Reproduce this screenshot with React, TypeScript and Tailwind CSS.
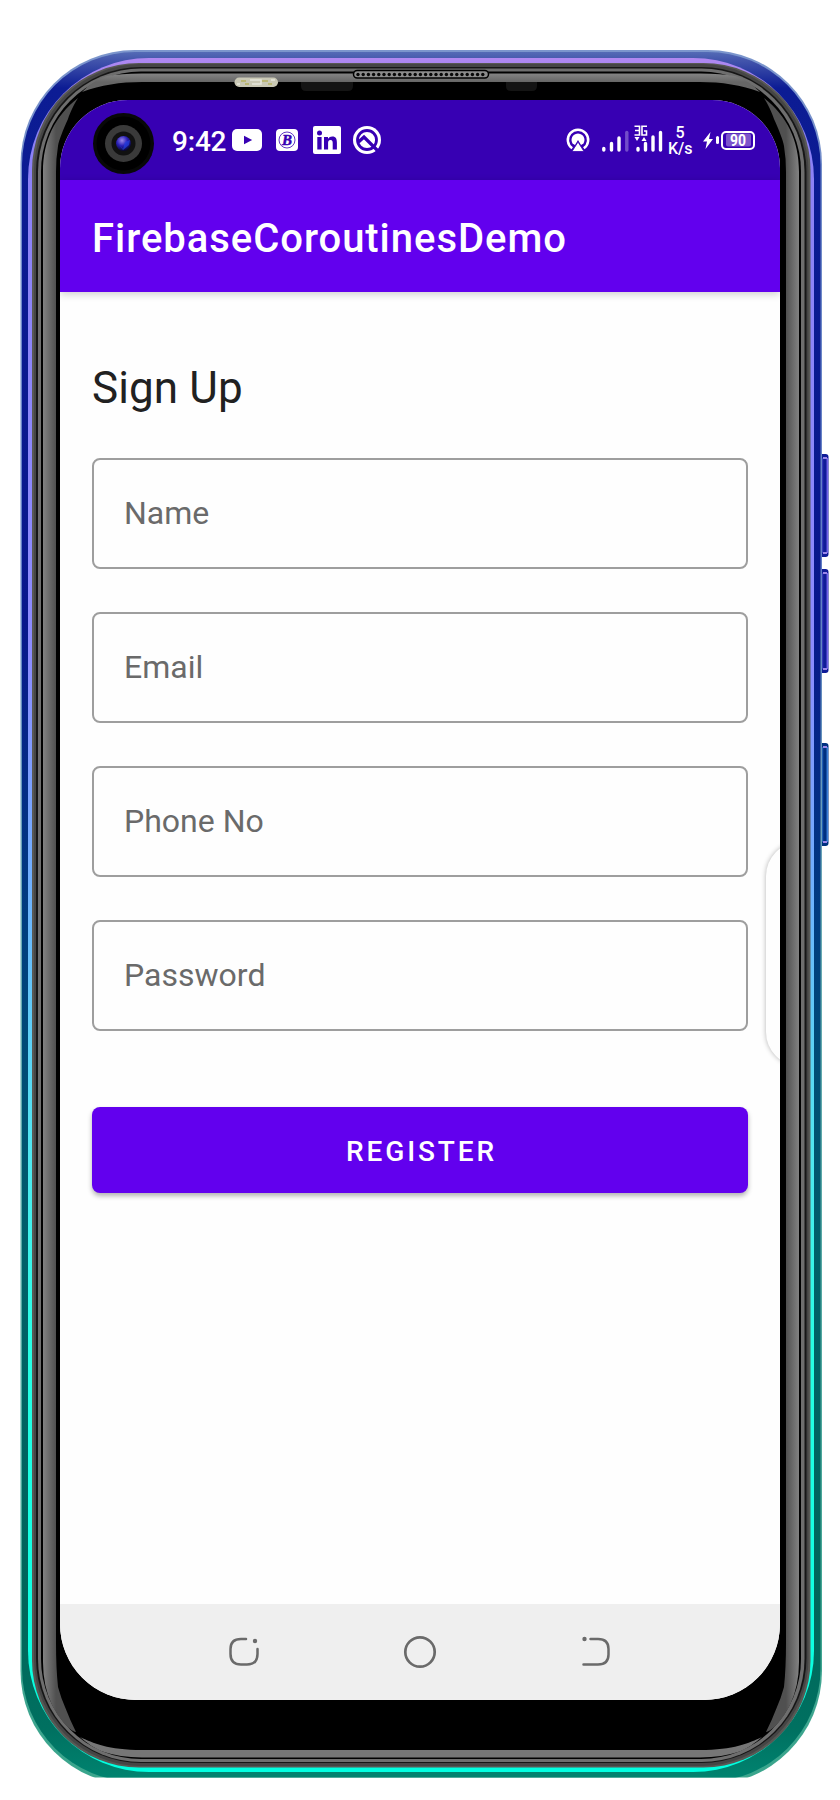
const ink = "#6a6a6a";

function Reflections() {
  return (
    <>
      <path
        d="M43 172C43 140 55 116 78 98C74 104 70 113 68 119C63 130 59 140 58 146Q56 158 56 172V1643Q56 1668 58 1687Q61 1698 65 1707Q70 1720 76 1732C69 1731 58 1717 52 1705Q43 1686 43 1662Z"
        fill="url(#glass)"
      />
      <path d="M82 92C90 84 97 79 107 76Q120 73.500 142 73.500H421V82H142C120 82 101 85 82 92Z" fill="url(#topGlass)" />
      <path d="M80 1737C93 1743 108 1750 142 1750H421V1757.500H142Q119 1757 104 1752C95 1749 87 1743 80 1737Z" fill="#767676" />
    </>
  );
}

function Frame() {
  const dots = Array.from({ length: 25 }, (_, i) => 358 + i * 5.2);
  const keys = [
    { y: 454, h: 103, fill: "#101c98", light: "#7264e8", dark: "#3a40c0" },
    { y: 569, h: 104, fill: "#101c98", light: "#7264e8", dark: "#3a40c0" },
    { y: 743, h: 103, fill: "#003080", light: "#3c80d8", dark: "#2868c0" },
  ];
  return (
    <svg className="absolute inset-0" width="840" height="1800" viewBox="0 0 840 1800">
      <defs>
        <linearGradient id="body" gradientUnits="userSpaceOnUse" x1="0" y1="50" x2="0" y2="1780">
          <stop offset="0" stopColor="#5870b8" />
          <stop offset="0.006" stopColor="#4355ac" />
          <stop offset="0.022" stopColor="#0c1c94" />
          <stop offset="0.33" stopColor="#08178c" />
          <stop offset="0.5" stopColor="#003c80" />
          <stop offset="0.7" stopColor="#006068" />
          <stop offset="0.9" stopColor="#00665a" />
          <stop offset="0.97" stopColor="#007060" />
          <stop offset="1" stopColor="#008470" />
        </linearGradient>
        <linearGradient id="edge" gradientUnits="userSpaceOnUse" x1="0" y1="50" x2="0" y2="1780">
          <stop offset="0" stopColor="#7b95cc" />
          <stop offset="0.3" stopColor="#5f7cc4" />
          <stop offset="0.5" stopColor="#6aaab4" />
          <stop offset="1" stopColor="#3aa58c" />
        </linearGradient>
        <linearGradient id="rim" gradientUnits="userSpaceOnUse" x1="0" y1="50" x2="0" y2="1780">
          <stop offset="0" stopColor="#b78af0" />
          <stop offset="0.03" stopColor="#8c80f5" />
          <stop offset="0.35" stopColor="#8c8cff" />
          <stop offset="0.48" stopColor="#70b0ff" />
          <stop offset="0.64" stopColor="#50e8f0" />
          <stop offset="0.75" stopColor="#28ffe4" />
          <stop offset="1" stopColor="#00ffe0" />
        </linearGradient>
        <linearGradient id="glass" gradientUnits="userSpaceOnUse" x1="43" y1="0" x2="56" y2="0">
          <stop offset="0" stopColor="#828282" />
          <stop offset="0.85" stopColor="#585858" />
          <stop offset="1" stopColor="#505050" />
        </linearGradient>
        <linearGradient id="topGlass" gradientUnits="userSpaceOnUse" x1="0" y1="73" x2="0" y2="82">
          <stop offset="0" stopColor="#868686" />
          <stop offset="1" stopColor="#666" />
        </linearGradient>
        <radialGradient id="lens" cx="0.4" cy="0.3" r="0.7">
          <stop offset="0" stopColor="#9a86e8" />
          <stop offset="0.5" stopColor="#2a20b8" />
          <stop offset="1" stopColor="#080830" />
        </radialGradient>
        <clipPath id="crop"><rect width="840" height="1777.5" /></clipPath>
      </defs>
      {keys.map((k) => (
        <g key={k.y} fill="none">
          <rect x="817" y={k.y} width="11.500" height={k.h} rx="3" fill={k.fill} />
          <path d={`M827.3 ${k.y + 4}v${k.h - 8}`} stroke={k.light} strokeWidth="1.500" />
          <path d={`M822.7 ${k.y + 4}v${k.h - 8}`} stroke={k.dark} />
          <path d={`M823 ${k.y + 4}h4M823 ${k.y + k.h - 4}h4`} stroke="#9a86e8" strokeWidth="2" />
        </g>
      ))}
      <g clipPath="url(#crop)">
        <rect x="20.500" y="50" width="801.500" height="1735" rx="114" fill="url(#edge)" />
        <rect x="22" y="52" width="798.500" height="1729.500" rx="113" fill="url(#body)" />
      </g>
      <rect x="28" y="58" width="786" height="1714" rx="121" fill="url(#rim)" />
      <rect x="32" y="63" width="778.500" height="1704.500" rx="107" fill="#585854" />
      <rect x="34" y="64" width="774.500" height="1702" rx="107" fill="#454545" />
      <rect x="36" y="67" width="770.500" height="1696" rx="105" fill="#161616" />
      <rect x="38" y="68.500" width="766.500" height="1693.500" rx="103" fill="#6e6e6e" />
      <rect x="41" y="71.500" width="760" height="1687.500" rx="100" fill="#000" />
      <Reflections />
      <g transform="translate(842 0) scale(-1 1)"><Reflections /></g>
      <rect x="234.500" y="77.500" width="43.500" height="9.500" rx="4.700" fill="#c9c8b5" />
      <path d="M241 81h5M245 84h4M262 81h6M268 84h4" stroke="#b5b060" strokeWidth="1.500" />
      <path d="M250 80h11v4h-9M271 80h4M237 84h3" stroke="#e6e6dc" strokeWidth="1.500" fill="none" />
      <path d="M301 82h52v4q0 5-5 5h-42q-5 0-5-5ZM506 82h31v4q0 5-5 5h-21q-5 0-5-5Z" fill="#141414" />
      <rect x="353.500" y="70.500" width="135" height="7.500" rx="3.750" fill="#8c8c8c" stroke="#000" strokeWidth="1.500" />
      {dots.map((x) => <circle key={x} cx={x} cy="74.500" r="1.700" fill="#080808" />)}
    </svg>
  );
}

function Camera() {
  return (
    <svg className="absolute top-[13px] left-[33px]" width="61" height="61" viewBox="0 0 61 61">
      <circle cx="30.500" cy="30.500" r="30.500" fill="#080808" />
      <circle cx="30.500" cy="30.500" r="27" fill="#000" />
      <circle cx="30.500" cy="30.500" r="18.500" fill="#3a3a3a" />
      <circle cx="30.500" cy="30.500" r="12" fill="#111" />
      <circle cx="30.500" cy="30.500" r="7.500" fill="url(#lens)" />
      <path d="M25 30l5 6 2-7 5-2-1 5-6 5" fill="#2440e0" opacity="0.7" />
    </svg>
  );
}

function StatusIcons() {
  return (
    <>
      <svg className="ml-[6px]" width="30" height="22" viewBox="0 0 30 22">
        <rect width="30" height="22" rx="5" fill="#fff" />
        <path d="M12 6.800L20.200 11L12 15.200Z" fill="#3700b3" />
      </svg>
      <svg className="ml-[14px]" width="22" height="22" viewBox="0 0 22 22">
        <rect width="22" height="22" rx="4" fill="#fff" />
        <circle cx="11" cy="11" r="8" fill="none" stroke="#3700b3" strokeWidth="0.800" />
        <text x="11" y="16" textAnchor="middle" fontFamily="Liberation Serif" fontStyle="italic" fontWeight="bold" fontSize="15" fill="#3700b3" stroke="#3700b3" strokeWidth="0.500">B</text>
      </svg>
      <svg className="ml-[15px]" width="28" height="28" viewBox="0 0 28 28">
        <rect width="28" height="28" rx="2" fill="#fff" />
        <circle cx="6.500" cy="7" r="2.500" fill="#3700b3" />
        <path d="M4.300 11h4.300v12.500H4.300ZM11 11h4v1.800q1.500-2.200 4.200-2.200c4 0 4.700 2.700 4.700 6.200v6.700h-4.200v-6.300c0-1.500-.2-3.100-2.200-3.100-2.100 0-2.400 1.500-2.400 3.100v6.300H11Z" fill="#3700b3" />
      </svg>
      <svg className="ml-[12px]" width="28" height="28" viewBox="0 0 28 28">
        <circle cx="14" cy="14" r="14" fill="#fff" />
        <circle cx="14" cy="14" r="9.500" fill="none" stroke="#3700b3" strokeWidth="2.800" />
        <path d="M5.500 16L11 11L24.500 24.500" fill="none" stroke="#3700b3" strokeWidth="3.200" />
      </svg>
    </>
  );
}

function SignalIcons() {
  return (
    <>
      <svg width="24" height="24" viewBox="0 0 24 24">
        <path d="M6.200 20.300A10.200 10.200 0 1 1 17.800 20.300" fill="none" stroke="#fff" strokeWidth="2.500" />
        <path d="M6.500 15.500A6.500 6.500 0 1 1 17.500 15.500L15 17L12 12L9 17Z" fill="#fff" />
        <path d="M12 14L18 23.500H6Z" fill="#fff" stroke="#3700b3" strokeWidth="0.800" />
      </svg>
      <svg className="ml-[12px]" width="61" height="30" viewBox="0 0 61 30">
        <g stroke="#fff" strokeWidth="3.400" strokeLinecap="round">
          <path d="M1.800 25v-1.500M9.500 25v-6.500M17 25V13M36 25v-1.500M43.500 25v-6.500M51 25V12M58.500 25V7.500" />
          <path d="M24.800 25V7.500" opacity="0.300" />
        </g>
        <path d="M32.500 1.200H37.500V10H32.500M33 5.500h4.500M45 1.200h-5V10h4.500V6h-2.500" fill="none" stroke="#fff" strokeWidth="1.600" />
        <path d="M32.500 12h5l-2.500 4ZM39.500 16h5l-2.500-4Z" fill="#fff" />
      </svg>
      <div className="mt-[2px] ml-[5px] w-[24px] text-center text-[16px] leading-[16px] font-medium tracking-[-0.100px]">
        <div className="-mt-px">5</div>
        <div>K/s</div>
      </div>
      <svg className="ml-[11px]" width="10" height="17" viewBox="0 0 10 17">
        <path d="M7.500 0L0 9.500H4L2.500 17L10 7H6Z" fill="#fff" />
      </svg>
      <div className="ml-[3px] h-[8px] w-[3px] rounded-sm bg-white" />
      <div className="mr-[25px] ml-[2px] flex h-[19px] w-[34px] items-center justify-center rounded-[5px] border-2 border-white">
        <svg className="shrink-0 overflow-visible" width="25" height="20" viewBox="0 0 25 20">
          <rect y="3.500" width="25" height="13" rx="2" fill="#7d55cb" />
          <text x="4" y="15.600" fontSize="16" fontWeight="700" fill="#fff" textLength="16" lengthAdjust="spacingAndGlyphs">90</text>
        </svg>
      </div>
    </>
  );
}

function Field({ label }: { label: string }) {
  return (
    <label className="flex h-[111px] items-center rounded-[8px] border-2 border-[#9e9e9e] pb-[2px] pl-[30px] text-[32px] tracking-[0.020px] text-[#6a6a6a]">
      {label}
    </label>
  );
}

export default function App() {
  return (
    <main className="relative h-[1800px] w-[840px] overflow-hidden bg-white font-['Roboto',sans-serif]">
      <Frame />
      <div className="relative px-[60px] pt-[100px]">
        <div className="relative flex h-[1600px] flex-col overflow-hidden rounded-t-[68px] rounded-b-[76px] bg-[#fefefe]">
          <header className="relative flex h-[80px] shrink-0 items-center bg-[#3700b3] text-white">
            <Camera />
            <div className="ml-[112px] pt-[3px] text-[28px] leading-none font-medium tracking-[-0.200px]">9:42</div>
            <StatusIcons />
            <div className="ml-auto flex items-center">
              <SignalIcons />
            </div>
          </header>
          <div className="z-10 flex h-[112px] shrink-0 items-center bg-[#6200ee] pt-[6px] pl-[32px] text-[40px] font-medium tracking-[0.960px] text-white shadow-[0_2px_8px_rgba(0,0,0,0.2)]">
            FirebaseCoroutinesDemo
          </div>
          <section className="flex grow flex-col px-[32px] pt-[68px]">
            <h1 className="text-[44px] leading-[56px] tracking-[0.100px] text-[#212121]">Sign Up</h1>
            <div className="mt-[42px] flex flex-col gap-[43px]">
              <Field label="Name" />
              <Field label="Email" />
              <Field label="Phone No" />
              <Field label="Password" />
            </div>
            <button className="mt-[76px] h-[86px] rounded-[8px] bg-[#6200ee] pt-[4px] pl-[3px] text-[28px] font-medium tracking-[2.900px] text-white shadow-[0_3px_5px_rgba(0,0,0,0.3)]">
              REGISTER
            </button>
          </section>
          <nav className="flex h-[96px] shrink-0 items-center justify-between bg-[#efefef] px-[167px]">
            <svg width="34" height="34" viewBox="0 0 34 34" fill="none" stroke={ink} strokeWidth="2.500" strokeLinecap="round">
              <path d="M19 4H14Q3.500 4 3.500 14V19Q3.500 29.500 14 29.500H20Q30.500 29.500 30.500 19V14" />
              <circle cx="28" cy="6" r="2.200" fill={ink} stroke="none" />
            </svg>
            <svg width="34" height="34" viewBox="0 0 34 34">
              <circle cx="17" cy="17" r="14.700" fill="none" stroke={ink} strokeWidth="2.700" />
            </svg>
            <svg width="34" height="34" viewBox="0 0 34 34" fill="none" stroke={ink} strokeWidth="2.500" strokeLinecap="round">
              <path d="M11.500 4H19Q29.500 4 29.500 14V19.500Q29.500 29.500 19 29.500H4.500" />
              <circle cx="5.500" cy="4" r="2.200" fill={ink} stroke="none" />
            </svg>
          </nav>
          <div className="absolute top-[742px] right-[-54px] h-[224px] w-[68px] rounded-[34px] bg-[#fefefe] shadow-[0_0_5px_rgba(0,0,0,0.3)]" />
        </div>
      </div>
    </main>
  );
}
